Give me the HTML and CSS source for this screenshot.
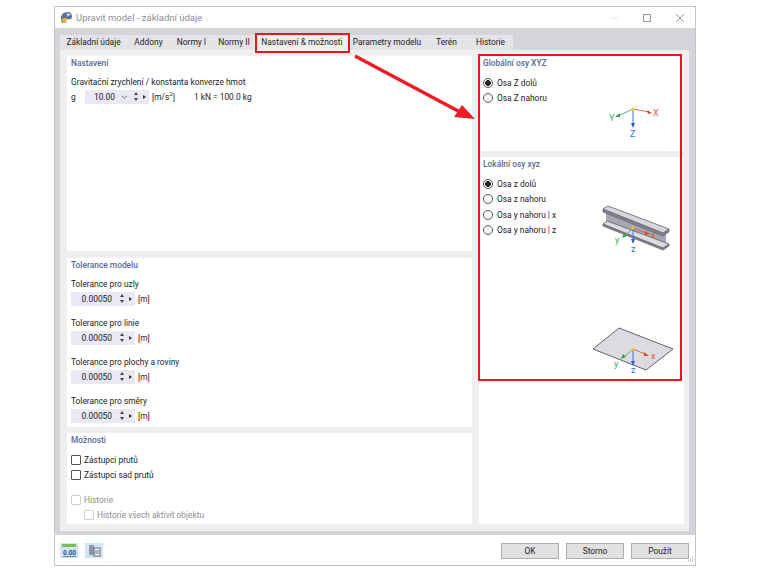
FILE: index.html
```html
<!DOCTYPE html>
<html lang="cs">
<head>
    <meta charset="UTF-8">
    <title>Upravit model - základní údaje</title>
    <link rel="stylesheet" href="styles.css">
</head>
<body>
    <div class="window">

        <!-- Title bar -->
        <div class="titlebar">
            <svg class="app-icon" viewBox="0 0 14 14">
                <path d="M1 8 C1 4 4 1 8 1 C11 1 13 3 13 6 L12 9 L6 9 L6 13 L2 13 Z" fill="#5b7196"/>
                <path d="M2 8 L7 7 L7 13 L3 13 Z" fill="#d8b23c"/>
                <path d="M7 2 L12 4 L8 6 Z" fill="#c9d3e2"/>
            </svg>
            <span class="title">Upravit model - základní údaje</span>
            <div class="win-controls">
                <svg viewBox="0 0 8 8"><path d="M0 4 H8" stroke="#e6e6e6" fill="none"/></svg>
                <svg viewBox="0 0 8 8"><rect x="0.5" y="0.5" width="7" height="7" stroke="#999" fill="none"/></svg>
                <svg viewBox="0 0 8 8"><path d="M0 0 L8 8 M8 0 L0 8" stroke="#999" fill="none"/></svg>
            </div>
        </div>

        <div class="dialog-body">
            <!-- Tabs -->
            <div class="tabs">
                <div class="tab tab-w67">Základní údaje</div>
                <div class="tab tab-w43">Addony</div>
                <div class="tab tab-w43">Normy I</div>
                <div class="tab tab-w42">Normy II</div>
                <div class="tab tab-w94 active">Nastavení &amp; možnosti</div>
                <div class="tab tab-w76">Parametry modelu</div>
                <div class="tab tab-w43">Terén</div>
                <div class="tab tab-w45">Historie</div>
            </div>

            <div class="tabpane">
                <div class="col-left">
                    <div class="panel panel-settings">
                        <h3>Nastavení</h3>
                        <div class="label label-first">Gravitační zrychlení / konstanta konverze hmot</div>
                        <div class="field-row">
                            <span class="g-label">g</span>
                            <div class="spin">
                                <span class="spin-value spin-value-g">10.00</span>
                                <svg class="chevron" viewBox="0 0 9 5"><path d="M1 1 L4.5 4 L8 1" stroke="#555" fill="none"/></svg>
                                <span class="arrows"><i class="up"></i><i class="down"></i></span>
                                <i class="play"></i>
                            </div>
                            <span class="unit">[m/s<sup>2</sup>]</span>
                            <span class="conversion">1 kN = 100.0 kg</span>
                        </div>
                    </div>

                    <div class="panel panel-tolerance">
                        <h3>Tolerance modelu</h3>
                        <div class="label label-first">Tolerance pro uzly</div>
                        <div class="field-row">
                            <div class="spin"><span class="spin-value">0.00050</span><span class="arrows"><i class="up"></i><i class="down"></i></span><i class="play"></i></div>
                            <span class="unit">[m]</span>
                        </div>
                        <div class="label">Tolerance pro linie</div>
                        <div class="field-row">
                            <div class="spin"><span class="spin-value">0.00050</span><span class="arrows"><i class="up"></i><i class="down"></i></span><i class="play"></i></div>
                            <span class="unit">[m]</span>
                        </div>
                        <div class="label">Tolerance pro plochy a roviny</div>
                        <div class="field-row">
                            <div class="spin"><span class="spin-value">0.00050</span><span class="arrows"><i class="up"></i><i class="down"></i></span><i class="play"></i></div>
                            <span class="unit">[m]</span>
                        </div>
                        <div class="label">Tolerance pro směry</div>
                        <div class="field-row">
                            <div class="spin"><span class="spin-value">0.00050</span><span class="arrows"><i class="up"></i><i class="down"></i></span><i class="play"></i></div>
                            <span class="unit">[m]</span>
                        </div>
                    </div>

                    <div class="panel panel-options">
                        <h3>Možnosti</h3>
                        <div class="check first"><span class="box"></span>Zástupci prutů</div>
                        <div class="check"><span class="box"></span>Zástupci sad prutů</div>
                        <div class="check disabled gap"><span class="box"></span>Historie</div>
                        <div class="check disabled indent"><span class="box"></span>Historie všech aktivit objektu</div>
                    </div>
                </div>

                <div class="col-right">
                    <div class="panel panel-global">
                        <h3>Globální osy XYZ</h3>
                        <div class="radio first checked"><span class="dot"></span>Osa Z dolů</div>
                        <div class="radio"><span class="dot"></span>Osa Z nahoru</div>
                        <svg class="axes-global" viewBox="605 98 60 42">
                            <path d="M633 109 L649 112" stroke="#d9694a"/>
                            <path d="M652 113 L647 110 L648 114 Z" fill="#d9482a"/>
                            <path d="M633 109 L618 116" stroke="#58b36a"/>
                            <path d="M615 117 L620 113 L620 117 Z" fill="#2f9e4d"/>
                            <path d="M633 109 V124" stroke="#3f73d8"/>
                            <path d="M633 128 L631 123 H635 Z" fill="#2a5fd0"/>
                            <circle cx="633" cy="109" r="1.5" fill="#f2cf1d"/>
                            <text x="653" y="116" class="ax-x">X</text>
                            <text x="609" y="121" class="ax-y">Y</text>
                            <text x="630" y="137" class="ax-z">Z</text>
                        </svg>
                    </div>

                    <div class="panel panel-local">
                        <h3>Lokální osy xyz</h3>
                        <div class="radio first checked"><span class="dot"></span>Osa z dolů</div>
                        <div class="radio"><span class="dot"></span>Osa z nahoru</div>
                        <div class="radio"><span class="dot"></span>Osa y nahoru | x</div>
                        <div class="radio"><span class="dot"></span>Osa y nahoru | z</div>

                        <svg class="beam" viewBox="595 200 85 55">
                            <path d="M606 210 L666 233 V246 L606 223 Z" fill="#a6a6b0"/>
                            <path d="M603 209 L603 212 L663 236 L669 232 L669 229 L663 233 Z" fill="#84848e" stroke="#5f5f68" stroke-width="0.7"/>
                            <path d="M603 209 L608 206 L669 229 L663 233 Z" fill="#d6d6dc" stroke="#5f5f68" stroke-width="0.8"/>
                            <path d="M603 224 L603 226 L663 250 L669 246 L669 244 L663 248 Z" fill="#84848e" stroke="#5f5f68" stroke-width="0.7"/>
                            <path d="M603 224 L607 221 L669 244 L663 248 Z" fill="#dcdce0" stroke="#5f5f68" stroke-width="0.8"/>
                            <path d="M633 228 L646 233" stroke="#d9694a"/>
                            <path d="M650 234 L645 231 L645 235 Z" fill="#d9482a"/>
                            <path d="M633 228 L625 236" stroke="#58b36a"/>
                            <path d="M622 238 L624 233 L627 236 Z" fill="#2f9e4d"/>
                            <path d="M633 228 V240" stroke="#3f73d8"/>
                            <path d="M633 244 L631 239 H635 Z" fill="#2a5fd0"/>
                            <circle cx="633" cy="228" r="1.4" fill="#f2cf1d"/>
                            <text x="651" y="238" class="ax-x">x</text>
                            <text x="615" y="243" class="ax-y">y</text>
                            <text x="631" y="252" class="ax-z">z</text>
                        </svg>

                        <svg class="plate" viewBox="590 325 90 50">
                            <path d="M593 349 L619 328 L673 349 L646 370 Z" fill="#dcdce0" stroke="#62626c" stroke-width="1"/>
                            <path d="M633 349 L645 354" stroke="#d9694a"/>
                            <path d="M649 356 L644 352 L644 356 Z" fill="#d9482a"/>
                            <path d="M633 349 L624 357" stroke="#58b36a"/>
                            <path d="M621 359 L623 354 L626 357 Z" fill="#2f9e4d"/>
                            <path d="M633 349 V362" stroke="#3f73d8"/>
                            <path d="M633 366 L631 361 H635 Z" fill="#2a5fd0"/>
                            <circle cx="633" cy="349" r="1.4" fill="#f2cf1d"/>
                            <text x="651" y="359" class="ax-x">x</text>
                            <text x="614" y="367" class="ax-y">y</text>
                            <text x="631" y="373" class="ax-z">z</text>
                        </svg>
                    </div>
                </div>
            </div>
        </div>

        <!-- Footer -->
        <div class="footer">
            <div class="tool-btn">
                <svg viewBox="0 0 18 15">
                    <rect x="2" y="1" width="14" height="3" fill="#7cba5a"/>
                    <text x="3" y="12" class="tool-num">0.00</text>
                </svg>
            </div>
            <div class="tool-btn">
                <svg viewBox="0 0 18 15">
                    <rect x="4" y="2" width="5" height="10" rx="1" fill="#8d97a3"/>
                    <rect x="9" y="5" width="6" height="8" fill="#f4f7fb" stroke="#5f6b78"/>
                    <path d="M11 7 V11 M13 7 V11" stroke="#5f6b78"/>
                </svg>
            </div>
            <div class="buttons">
                <button>OK</button>
                <button>Storno</button>
                <button>Použít</button>
            </div>
            <svg class="grip" viewBox="0 0 8 8">
                <path d="M6 1 H7 M4 3 H5 M6 3 H7 M2 5 H3 M4 5 H5 M6 5 H7" stroke="#9a9a9a" fill="none"/>
            </svg>
        </div>
    </div>

    <!-- Red annotations over the screenshot -->
    <div class="mark mark-tab"></div>
    <div class="mark mark-axes"></div>
    <svg class="mark-arrow" viewBox="0 0 130 75">
        <path d="M2 2 L107 58" stroke="#ee1c25" stroke-width="3.4" fill="none"/>
        <path d="M122 65 L101 63 L109 51 Z" fill="#ee1c25"/>
    </svg>
</body>
</html>
```

FILE: styles.css
```css
html, body {
    margin: 0;
    padding: 0;
    background: #fff;
}
body {
    width: 760px;
    height: 570px;
    overflow: hidden;
    position: relative;
    font-family: Roboto, "Liberation Sans", sans-serif;
    font-size: 8.4px;
    color: #222226;
}
.window {
    box-sizing: border-box;
    width: 642px;
    height: 560px;
    margin: 6px 0 0 54px;
    border: 1px solid #c4c4c6;
    display: flex;
    flex-direction: column;
    background: #fff;
}

/* title bar */
.titlebar {
    height: 21px;
    flex: none;
    display: flex;
    align-items: center;
    padding-left: 5px;
}
.app-icon {
    width: 13px;
    height: 13px;
}
.title {
    margin-left: 3px;
    font-size: 9.5px;
    color: #8d8d8f;
}
.win-controls {
    margin-left: auto;
    display: flex;
    gap: 25px;
    padding-right: 11px;
}
.win-controls svg {
    display: block;
    width: 8px;
    height: 8px;
}

/* tabs */
.dialog-body {
    flex: 1;
    background: #d5d5d9;
    padding: 7px 6px 4px 5px;
    display: flex;
    flex-direction: column;
}
.tabs {
    display: flex;
    height: 15px;
    flex: none;
}
.tab {
    background: #e4e4e6;
    text-align: center;
    line-height: 15px;
    white-space: nowrap;
}
.tab.active {
    background: #efefef;
}
.tab-w42 { width: 42px; }
.tab-w43 { width: 43px; }
.tab-w45 { width: 45px; }
.tab-w67 { width: 67px; }
.tab-w76 { width: 76px; }
.tab-w94 { width: 94px; }

.tabpane {
    flex: 1;
    background: #efefef;
    padding: 6px 5px 7px 7px;
    display: flex;
    gap: 7px;
}
.col-left {
    width: 405px;
    display: flex;
    flex-direction: column;
    gap: 6px;
}
.col-right {
    flex: 1;
    display: flex;
    flex-direction: column;
    gap: 6px;
}
.panel {
    background: #fff;
    position: relative;
    padding-left: 4px;
}
.panel h3 {
    margin: 0;
    padding-top: 1px;
    font-size: 8.4px;
    line-height: 12px;
    font-weight: 500;
    color: #566a96;
}
.panel-settings {
    height: 195px;
}
.panel-tolerance {
    height: 169px;
    margin-top: 1px;
}
.panel-options {
    flex: 1;
}
.panel-global {
    height: 95px;
}
.panel-local {
    flex: 1;
}

/* form rows */
.label {
    line-height: 12px;
    margin-top: 11px;
}
.label-first {
    margin-top: 6.5px;
}
.field-row {
    display: flex;
    align-items: center;
    height: 14px;
    margin-top: 2px;
}
.g-label {
    width: 14px;
}
.spin {
    width: 64px;
    height: 14px;
    background: #e9e9f3;
    position: relative;
    display: flex;
    align-items: center;
}
.spin-value {
    width: 41px;
    text-align: right;
}
.spin-value-g {
    width: 30px;
}
.chevron {
    width: 7px;
    height: 4px;
    position: absolute;
    left: 36px;
    top: 5px;
}
.arrows {
    position: absolute;
    left: 49px;
    top: 2px;
    display: flex;
    flex-direction: column;
    gap: 3px;
}
.up, .down {
    display: block;
    width: 0;
    height: 0;
    border-left: 2px solid transparent;
    border-right: 2px solid transparent;
}
.up {
    border-bottom: 3px solid #444;
}
.down {
    border-top: 3px solid #444;
}
.play {
    position: absolute;
    left: 58px;
    top: 5px;
    width: 0;
    height: 0;
    border-top: 2.5px solid transparent;
    border-bottom: 2.5px solid transparent;
    border-left: 3px solid #333;
}
.unit {
    margin-left: 3px;
}
.unit sup {
    font-size: 6px;
    line-height: 0;
}
.conversion {
    margin-left: 19px;
}

/* check boxes and radios */
.check, .radio {
    display: flex;
    align-items: center;
    height: 15.5px;
}
.check.first {
    margin-top: 6px;
}
.radio.first {
    margin-top: 6px;
}
.check.gap {
    margin-top: 9px;
}
.check.indent {
    padding-left: 13px;
}
.check.disabled {
    color: #8e8e90;
}
.box {
    box-sizing: border-box;
    width: 10px;
    height: 10px;
    border: 1px solid #555;
    border-radius: 1px;
    margin-right: 3px;
}
.disabled .box {
    border-color: #d0d0d0;
}
.dot {
    box-sizing: border-box;
    width: 10px;
    height: 10px;
    border: 1px solid #555;
    border-radius: 50%;
    margin-right: 4px;
    background: #fff;
}
.checked .dot {
    background: radial-gradient(circle, #222 0 2.6px, #fff 3.1px);
}

/* axis drawings */
.axes-global, .beam, .plate {
    position: absolute;
    fill: none;
}
.axes-global {
    left: 126px;
    top: 42px;
    width: 60px;
    height: 42px;
}
.beam {
    left: 116px;
    top: 43px;
    width: 85px;
    height: 55px;
}
.plate {
    left: 111px;
    top: 168px;
    width: 90px;
    height: 50px;
}
.axes-global text, .beam text, .plate text {
    font-size: 9px;
    font-family: Roboto, sans-serif;
    stroke: none;
}
.ax-x { fill: #d9583a; }
.ax-y { fill: #3aa65a; }
.ax-z { fill: #3a6fd8; }

/* footer */
.footer {
    height: 29px;
    flex: none;
    display: flex;
    align-items: center;
    padding: 1px 6px 0 5px;
    position: relative;
}
.tool-btn {
    width: 18px;
    height: 15px;
    background: #cfe4f5;
    margin-right: 7px;
}
.tool-btn svg {
    display: block;
    width: 18px;
    height: 15px;
}
.tool-num {
    font-size: 6.5px;
    font-weight: 700;
    fill: #28507c;
    text-decoration: underline;
}
.buttons {
    margin-left: auto;
    display: flex;
    gap: 7px;
}
button {
    box-sizing: border-box;
    width: 58px;
    height: 16px;
    padding: 0;
    background: #e1e1e1;
    border: 1px solid #adadad;
    font-family: inherit;
    font-size: 8.4px;
    color: #222226;
}
.grip {
    position: absolute;
    right: 1px;
    bottom: 1px;
    width: 8px;
    height: 8px;
}

/* annotations */
.mark {
    position: absolute;
    box-sizing: border-box;
    border: 2px solid #e8141f;
}
.mark-tab {
    left: 255px;
    top: 33px;
    width: 95px;
    height: 20px;
}
.mark-axes {
    left: 478px;
    top: 54px;
    width: 204px;
    height: 327px;
}
.mark-arrow {
    position: absolute;
    left: 353px;
    top: 54px;
    width: 130px;
    height: 75px;
}
```
